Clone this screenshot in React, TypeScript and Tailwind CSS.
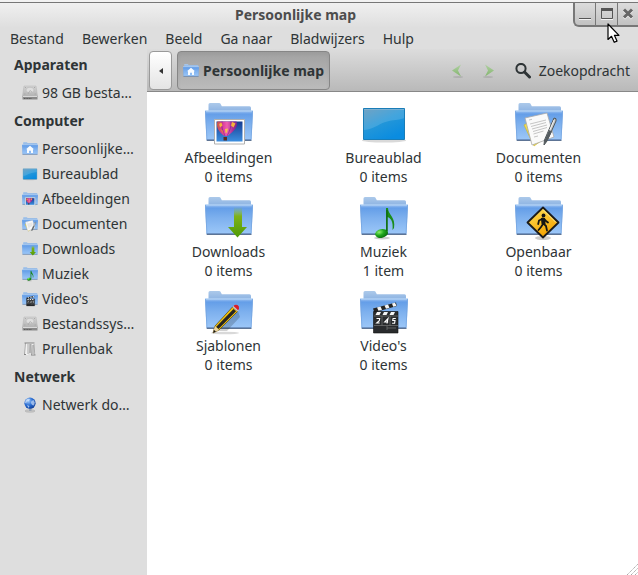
import type { ReactNode } from "react";

interface IconProps {
  className?: string;
}

interface Place {
  name: string;
  icon: (props: IconProps) => ReactNode;
}

interface Folder extends Place {
  count: string;
}

// Gradients shared by all the icons, referenced by id
function IconDefs() {
  return (
    <svg className="absolute size-0" aria-hidden="true">
      <defs>
        <linearGradient id="folderFront" x1="0" y1="0" x2="0" y2="1">
          <stop offset="0" stopColor="#a5c7f2" />
          <stop offset="0.12" stopColor="#649ee8" />
          <stop offset="0.45" stopColor="#7db0ee" />
          <stop offset="1" stopColor="#9cc7f8" />
        </linearGradient>
        <linearGradient id="folderBack" x1="0" y1="0" x2="0" y2="1">
          <stop offset="0" stopColor="#acc9ea" />
          <stop offset="1" stopColor="#8bb2e2" />
        </linearGradient>
        <linearGradient id="desktop" x1="0" y1="0" x2="0.6" y2="1">
          <stop offset="0" stopColor="#5b93b9" />
          <stop offset="0.5" stopColor="#2597d8" />
          <stop offset="1" stopColor="#0a8ce0" />
        </linearGradient>
        <linearGradient id="sky" x1="0" y1="0" x2="0" y2="1">
          <stop offset="0" stopColor="#153b91" />
          <stop offset="1" stopColor="#3d8fdf" />
        </linearGradient>
        <linearGradient id="balloon" x1="0" y1="0" x2="1" y2="0">
          <stop offset="0" stopColor="#c8603f" />
          <stop offset="0.25" stopColor="#d8359b" />
          <stop offset="0.5" stopColor="#ee5fae" />
          <stop offset="0.8" stopColor="#a62d97" />
          <stop offset="1" stopColor="#6d2a8c" />
        </linearGradient>
        <linearGradient id="arrow" x1="0" y1="0" x2="0" y2="1">
          <stop offset="0" stopColor="#8dbb45" stopOpacity="0" />
          <stop offset="0.3" stopColor="#7fb217" />
          <stop offset="1" stopColor="#4e9a06" />
        </linearGradient>
        <radialGradient id="note" cx="0.35" cy="0.3" r="0.8">
          <stop offset="0" stopColor="#8ff06a" />
          <stop offset="0.45" stopColor="#21a81d" />
          <stop offset="1" stopColor="#056408" />
        </radialGradient>
        <linearGradient id="sign" x1="0" y1="0" x2="0.5" y2="1">
          <stop offset="0" stopColor="#ffe25c" />
          <stop offset="1" stopColor="#f5a300" />
        </linearGradient>
        <linearGradient id="disk" x1="0" y1="0" x2="0" y2="1">
          <stop offset="0" stopColor="#d4d4d4" />
          <stop offset="1" stopColor="#b4b4b4" />
        </linearGradient>
        <radialGradient id="globe" cx="0.35" cy="0.3" r="0.8">
          <stop offset="0" stopColor="#a5cdfa" />
          <stop offset="0.5" stopColor="#286bd1" />
          <stop offset="1" stopColor="#0e3a91" />
        </radialGradient>
        <linearGradient id="navArrow" x1="0" y1="0" x2="0" y2="1">
          <stop offset="0" stopColor="#b0d0a2" />
          <stop offset="1" stopColor="#82b56d" />
        </linearGradient>
      </defs>
    </svg>
  );
}

function FolderIcon({ className, children }: IconProps & { children?: ReactNode }) {
  return (
    <svg className={className} viewBox="0 0 48 48" aria-hidden="true">
      <path d="M3.5 12V4.5q0-1.5 1.5-1.5h9q1.3 0 1.8 1.2l1 2H44.5q1.5 0 1.5 1.5V12z" fill="url(#folderBack)" />
      <path d="M1 39.5h45.5V41H2z" fill="#27466f" opacity="0.75" />
      <path d="M0 10.5h48L46.500 40h-45z" fill="url(#folderFront)" />
      <path d="M0 10.5h48v1H0z" fill="#bcd8f8" opacity="0.8" />
      <path d="M.5 11l1.4 28.5M47.5 11l-1.4 28.5" stroke="#75a5e0" strokeWidth="0.8" />
      <path d="M2 39.6h44" stroke="#5d7fae" strokeWidth="0.8" />
      {children}
    </svg>
  );
}

function HomeIcon({ className }: IconProps) {
  return (
    <FolderIcon className={className}>
      <path d="M24 14l12 11h-3v11h-6v-7h-6v7h-6V25h-3z" fill="#f7fbff" />
    </FolderIcon>
  );
}

function PicturesIcon({ className }: IconProps) {
  return (
    <FolderIcon className={className}>
      <path d="M9.5 19.5h30v24.500h-30z" fill="#fff" stroke="#b0b0b0" />
      <path d="M11.500 21.500h26v20h-26z" fill="url(#sky)" />
      <path d="M12.500 21.500h19c2.500 5-3 10-9 14.500h-3c-5-3-9-9-7-14.500z" fill="url(#balloon)" />
      <path d="M17 21.500c-1 5 1 10 3 14.500M26 21.500c.5 5-1.500 10-4 14.500" fill="none" stroke="#7b2890" strokeWidth="0.7" />
      <path d="M14 24l2.500-1.500 1 3-2.500 2zM27 22l3.500 1.500-2 4-2.500-2z" fill="#f3b53a" />
      <path d="M20 29l3-.5-1 4-1.500.5z" fill="#f6c24c" />
      <path d="M15 29l2.500 1.500 1.500 4z" fill="#e98534" />
      <path d="M18.500 37h3.500v3.500h-3.500z" fill="#592d23" />
    </FolderIcon>
  );
}

function DesktopIcon({ className }: IconProps) {
  return (
    <svg className={className} viewBox="0 0 48 48" aria-hidden="true">
      <ellipse cx="24" cy="40.5" rx="22" ry="2" fill="#000" opacity="0.15" />
      <path d="M3.5 8.5h41v31h-41z" fill="url(#desktop)" stroke="#197db8" />
      <path d="M4 30c11-1 15-7 25-9 7-1.5 11-1 15-3V9H4z" fill="#fff" opacity="0.14" />
      <path d="M4 9h40v1H4z" fill="#8db9d5" opacity="0.6" />
    </svg>
  );
}

function DocumentsIcon({ className }: IconProps) {
  return (
    <FolderIcon className={className}>
      <path d="M9 25l7-4 10 20-7 5z" fill="#f0dc52" stroke="#c9b22d" strokeWidth="0.6" />
      <path d="M10 18l22-5 7 24-22 8z" fill="#fafafa" stroke="#aaa" strokeWidth="0.8" />
      <path
        d="M14 20l3-.7M15 24l16-4M16 26.5l15-4M17 29l15-4M18 31.500l14-4M18.500 34l10-3M19 37l4-1"
        stroke="#adadad"
        strokeWidth="0.7"
      />
      <path d="M39 18q3 0 2 3L32 41l-3 4 .5-5z" fill="#c4c7c8" stroke="#4e5558" strokeWidth="1" />
      <path d="M39 20L31 39" stroke="#fff" strokeWidth="0.8" />
      <path d="M34 30l3 1.500-4.500 9L29 45l1-6z" fill="#555c60" />
    </FolderIcon>
  );
}

function DownloadsIcon({ className }: IconProps) {
  return (
    <FolderIcon className={className}>
      <path d="M29 13h8v20h5L32.500 43.500 23 33h6z" fill="url(#arrow)" />
    </FolderIcon>
  );
}

function MusicIcon({ className }: IconProps) {
  return (
    <FolderIcon className={className}>
      <ellipse cx="22" cy="44" rx="8" ry="1.5" fill="#000" opacity="0.2" />
      <path d="M26 14h2c0 7 8 9 6 20l-1.500 2c1-9-2-12-5-13v17H26z" fill="#1b8d1c" />
      <ellipse cx="21.5" cy="39.5" rx="6.5" ry="4.3" transform="rotate(-12 21.5 39.5)" fill="url(#note)" />
      <path d="M27 16v21" stroke="#0a5b0b" strokeWidth="1" />
    </FolderIcon>
  );
}

function PublicIcon({ className }: IconProps) {
  return (
    <FolderIcon className={className}>
      <ellipse cx="28" cy="44" rx="8" ry="2" fill="#000" opacity="0.2" />
      <path
        d="M28 13.500L43.500 28.500 28 43.500 12.500 28.500z"
        fill="url(#sign)"
        stroke="#1b1b1b"
        strokeWidth="1.8"
        strokeLinejoin="round"
      />
      <path d="M28 15.500L41 28.500" stroke="#fff3a5" strokeWidth="0.8" />
      <circle cx="28.5" cy="21.5" r="1.9" fill="#151515" />
      <path
        d="M27.500 24.500L28 30l-2 3-2.500 3M28 29l3 3 1 4.500M27 25l-3 1.500-.8 3.500M29 25l2 2 2 1.500"
        fill="none"
        stroke="#151515"
        strokeWidth="1.8"
        strokeLinecap="round"
      />
      <path d="M26 24h4l.5 6h-4z" fill="#151515" />
    </FolderIcon>
  );
}

function TemplatesIcon({ className }: IconProps) {
  return (
    <FolderIcon className={className}>
      <path d="M13 43l20-20 2 6-13 14z" fill="#000" opacity="0.18" />
      <ellipse cx="20" cy="45" rx="14" ry="1.3" fill="#000" opacity="0.15" />
      <path d="M27.500 19l5 4.500L14 42l-6 3 2-7z" fill="#f5c50b" stroke="#564107" strokeWidth="0.7" />
      <path d="M28.500 21l2.500 2.200L13.500 41l-2.500-2z" fill="#252525" />
      <path d="M10 38l4 4-6 3z" fill="#ead4a1" />
      <path d="M9 42l2 1.500L8 45z" fill="#111" />
      <path d="M27.500 19l1.500-1.500 5 4.500-1.500 1.500z" fill="#c9c9c9" />
      <path d="M28.500 18q1.500-2 4-1 2 1 1.500 4l-1 1.200z" fill="#d91c28" />
    </FolderIcon>
  );
}

function VideosIcon({ className }: IconProps) {
  return (
    <FolderIcon className={className}>
      <path d="M13 20.500l23-6 .8 3.500-22.500 6.500z" fill="#242424" />
      <path d="M17 19.500l3.500-1 1.500 3.200-3.500 1zM24.500 17.500l3.500-1 1.500 3.200-3.500 1zM32 15.500l3-.8 1.500 3-3.300 1z" fill="#f5f5f5" />
      <path d="M13.500 23.500H38V45H13.500z" fill="#292b2d" stroke="#111" strokeWidth="0.6" />
      <path d="M17 24h4l-1.500 3h-4zM24 24h4l-1.500 3h-4zM31 24h4l-1.500 3h-4z" fill="#f5f5f5" />
      <path d="M14 28h24M14 37.500h24M22 28v9.500M30 28v9.500M27 37.500V42M27 40h9" stroke="#777" strokeWidth="0.7" />
      <g fill="none" stroke="#fff" strokeWidth="1.1">
        <path d="M16.500 30.500h3.200l-.4 2.200-2.600 2.300h3" />
        <path d="M27 35.500l1-5-3.300 3.500h3.500" />
        <path d="M35.800 30.500h-2.700l-.4 2h2.300l-.4 2.700h-2.500" />
      </g>
    </FolderIcon>
  );
}

function DiskIcon({ className }: IconProps) {
  return (
    <svg className={className} viewBox="0 0 16 16" aria-hidden="true">
      <path d="M2 1h12l1.500 10H.5z" fill="url(#disk)" stroke="#b4b4b4" strokeWidth="0.5" />
      <ellipse cx="8" cy="5" rx="4" ry="2.8" fill="#dedede" stroke="#b0b0b0" strokeWidth="0.5" />
      <path d="M6 9l2-3.500 2 1.500" fill="none" stroke="#a5a5a5" strokeWidth="0.7" />
      <path d="M3 2.500h1M12 2.500h1M2.300 9h1M12.700 9h1" stroke="#9a9a9a" strokeWidth="0.7" />
      <path d="M.5 11h15v3.500H.5z" fill="#8a8a8a" />
      <path d="M1 11.500h14" stroke="#eee" strokeWidth="0.8" />
      <path d="M2 13.500h8" stroke="#555" strokeWidth="0.9" strokeDasharray="1 0.6" />
    </svg>
  );
}

function TrashIcon({ className }: IconProps) {
  return (
    <svg className={className} viewBox="0 0 16 16" aria-hidden="true">
      <path d="M3 2.500h9.500L13.500 14H8.700L8 4 6.300 14H1.800z" fill="#f0f0f0" />
      <path d="M3.500 2l-1 11M6 3v10M9 3l.5 11M12 3l.8 11" stroke="#a0a0a0" strokeWidth="0.9" />
      <path d="M2.500 2h10M2 13.500h2M9 14h4.500" stroke="#858585" strokeWidth="1" />
      <path d="M8 3v9M11 4v9" stroke="#666" strokeWidth="0.7" />
    </svg>
  );
}

function NetworkIcon({ className }: IconProps) {
  return (
    <svg className={className} viewBox="0 0 16 16" aria-hidden="true">
      <ellipse cx="8" cy="14" rx="5" ry="1.3" fill="#c5c5c5" stroke="#aaa" strokeWidth="0.5" />
      <path d="M7 10h2.500v4H7z" fill="#9ba5b1" />
      <circle cx="8" cy="6.2" r="5.6" fill="url(#globe)" />
      <path d="M4 3q2-2 4-1l-1 2-2 .5-1 2-1-1zM9.500 4l2-1 1.300 2.500-.8 3-2-.5-1-2z" fill="#e7f2ff" opacity="0.6" />
      <path d="M5 8l2.500 1-1 2z" fill="#c9defa" opacity="0.8" />
    </svg>
  );
}

const menus = ["Bestand", "Bewerken", "Beeld", "Ga naar", "Bladwijzers", "Hulp"];

const sections: { title: string; places: Place[] }[] = [
  { title: "Apparaten", places: [{ name: "98 GB besta…", icon: DiskIcon }] },
  {
    title: "Computer",
    places: [
      { name: "Persoonlijke…", icon: HomeIcon },
      { name: "Bureaublad", icon: DesktopIcon },
      { name: "Afbeeldingen", icon: PicturesIcon },
      { name: "Documenten", icon: DocumentsIcon },
      { name: "Downloads", icon: DownloadsIcon },
      { name: "Muziek", icon: MusicIcon },
      { name: "Video's", icon: VideosIcon },
      { name: "Bestandssys…", icon: DiskIcon },
      { name: "Prullenbak", icon: TrashIcon },
    ],
  },
  { title: "Netwerk", places: [{ name: "Netwerk do…", icon: NetworkIcon }] },
];

const folders: Folder[] = [
  { name: "Afbeeldingen", count: "0 items", icon: PicturesIcon },
  { name: "Bureaublad", count: "0 items", icon: DesktopIcon },
  { name: "Documenten", count: "0 items", icon: DocumentsIcon },
  { name: "Downloads", count: "0 items", icon: DownloadsIcon },
  { name: "Muziek", count: "1 item", icon: MusicIcon },
  { name: "Openbaar", count: "0 items", icon: PublicIcon },
  { name: "Sjablonen", count: "0 items", icon: TemplatesIcon },
  { name: "Video's", count: "0 items", icon: VideosIcon },
];

function TitleBar() {
  return (
    <header className="flex h-[26px] items-start border-t border-[#777] bg-linear-to-b from-[#f0f0f0] to-[#dedede]">
      <h1 className="flex-1 pl-[18px] text-center font-bold leading-6 text-[#4d4d4d]">Persoonlijke map</h1>
      <div className="flex h-6 divide-x divide-[#777] rounded-bl-md border-b-2 border-l-2 border-[#777] bg-linear-to-b from-[#dcdcdc] to-[#c2c2c2]">
        <button type="button" aria-label="Minimaliseren" className="flex w-[21px] items-center justify-center">
          <svg className="size-4" viewBox="0 0 16 16">
            <path d="M2 12.500h12" stroke="#555" />
            <path d="M2 13.500h12" stroke="#f2f2f2" />
          </svg>
        </button>
        <button type="button" aria-label="Maximaliseren" className="flex w-[22px] items-center justify-center">
          <svg className="size-4" viewBox="0 0 16 16">
            <path d="M2.500 4v8.500h11V4" fill="none" stroke="#555" />
            <path d="M2 2h12v3H2z" fill="#555" />
            <path d="M2 13.500h12" stroke="#f2f2f2" />
          </svg>
        </button>
        <button type="button" aria-label="Sluiten" className="flex w-[20px] items-center justify-center">
          <svg className="size-4" viewBox="0 0 16 16">
            <path d="M4 4.500l8 8M12 4.500l-8 8" stroke="#f2f2f2" strokeWidth="3" />
            <path d="M4 3.500l8 8M12 3.500l-8 8" stroke="#666" strokeWidth="3" />
          </svg>
        </button>
      </div>
    </header>
  );
}

function Sidebar() {
  return (
    <aside className="w-[147px] shrink-0 overflow-hidden">
      {sections.map((section) => (
        <nav key={section.title} aria-label={section.title}>
          <h2 className="pl-3.5 font-bold leading-[31px]">{section.title}</h2>
          <ul>
            {section.places.map(({ name, icon: Icon }) => (
              <li key={name}>
                <a href="#" className="flex h-[25px] items-center gap-1 whitespace-nowrap pl-[22px]">
                  <Icon className="size-4 shrink-0" />
                  {name}
                </a>
              </li>
            ))}
          </ul>
        </nav>
      ))}
    </aside>
  );
}

function Toolbar() {
  return (
    <div className="flex h-[43px] items-center border-b border-[#888] bg-linear-to-b from-[#dcdcdc] to-[#b9b9b9] pl-0.5 pr-2 pt-px">
      <button
        type="button"
        aria-label="Pad verschuiven"
        className="flex h-[39px] w-[23px] items-center justify-center rounded-sm border border-[#999] bg-linear-to-b from-white to-[#e4e4e4]"
      >
        <svg className="size-2" viewBox="0 0 8 8">
          <path d="M6 1v6L2 4z" fill="#333" />
        </svg>
      </button>
      <button
        type="button"
        className="ml-[5px] flex h-[39px] items-center gap-1 whitespace-nowrap rounded-sm border border-[#868686] bg-linear-to-b from-[#a2a2a2] to-[#bbb] px-[5px] font-bold shadow-inner"
      >
        <HomeIcon className="size-4" />
        Persoonlijke map
      </button>
      <div className="ml-auto flex items-center">
        <button type="button" aria-label="Vorige" className="mr-4">
          <svg className="size-4" viewBox="0 0 16 16">
            <ellipse cx="9" cy="14" rx="5" ry="1" fill="#000" opacity="0.1" />
            <path d="M12 1.500L3 7.500l9 6L9 7.500z" fill="url(#navArrow)" />
          </svg>
        </button>
        <button type="button" aria-label="Volgende" className="mr-[18px]">
          <svg className="size-4" viewBox="0 0 16 16">
            <ellipse cx="7" cy="14" rx="5" ry="1" fill="#000" opacity="0.1" />
            <path d="M4 1.500l9 6-9 6 3-6z" fill="url(#navArrow)" />
          </svg>
        </button>
        <button type="button" className="flex items-center gap-2">
          <svg className="size-4" viewBox="0 0 16 16" fill="none" stroke="#2e3436">
            <circle cx="6" cy="5.5" r="4.6" strokeWidth="2" />
            <path d="M9.500 9l5 5" strokeWidth="3" strokeLinecap="round" />
          </svg>
          Zoekopdracht
        </button>
      </div>
    </div>
  );
}

export default function App() {
  return (
    <div className="relative flex min-h-screen flex-col bg-[#dedede] font-['Noto_Sans',sans-serif] text-sm text-[#2e3436]">
      <IconDefs />
      <div className="h-0.5 bg-[#f2f2f2]" />
      <TitleBar />
      <div className="flex h-[21px] items-center gap-[18px] whitespace-nowrap pl-2.5">
        {menus.map((menu) => (
          <button key={menu} type="button">
            {menu}
          </button>
        ))}
      </div>
      <div className="flex flex-1">
        <Sidebar />
        <main className="flex min-w-0 flex-1 flex-col bg-white">
          <Toolbar />
          <div className="grid grid-cols-[repeat(auto-fill,155px)] gap-y-2 pl-1 pt-2">
            {folders.map(({ name, count, icon: Icon }) => (
              <button key={name} type="button" className="flex flex-col items-center leading-[19px]">
                <Icon className="size-12" />
                <span>{name}</span>
                <span>{count}</span>
              </button>
            ))}
          </div>
        </main>
      </div>

      {/* Resize grip */}
      <svg className="absolute bottom-0 right-0 size-3" viewBox="0 0 12 12" stroke="#aaa">
        <path d="M1 12L12 1M5 12l7-7M9 12l3-3" strokeDasharray="1.4 0.6" />
      </svg>

      {/* Mouse pointer */}
      <svg className="absolute right-[18px] top-[23px] h-[21px] w-[13px]" viewBox="0 0 13 21">
        <path
          d="M1 1v15.500l3.500-3.200 2.700 6 2.800-1.200-2.600-5.800H12z"
          fill="#fff"
          stroke="#000"
          strokeWidth="1.2"
          strokeLinejoin="round"
        />
      </svg>
    </div>
  );
}
